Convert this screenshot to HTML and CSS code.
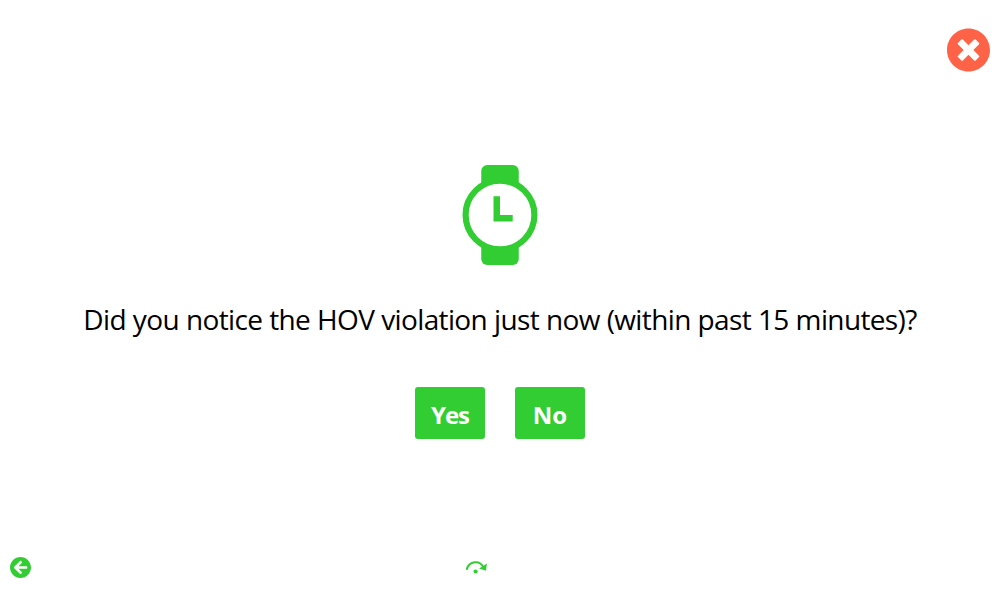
FILE: index.html
```
<!DOCTYPE html>
<html lang="en">
<head>
<meta charset="utf-8">
<title>HOV violation</title>
<link rel="stylesheet" href="styles.css">
</head>
<body>
<div class="page">
  <header class="top">
    <a class="close" aria-label="Close"><svg viewBox="8 2.200 496 507.500" width="43" height="44"><path d="M256 8C119 8 8 119 8 256s111 248 248 248 248-111 248-248S393 8 256 8zm121.600 313.100c4.700 4.700 4.700 12.300 0 17L338 377.600c-4.700 4.700-12.300 4.700-17 0L256 312l-65.100 65.600c-4.700 4.700-12.300 4.700-17 0L134.400 338c-4.700-4.700-4.700-12.300 0-17l65.600-65-65.600-65.100c-4.700-4.700-4.700-12.300 0-17l39.600-39.600c4.700-4.700 12.300-4.700 17 0l65 65.700 65.100-65.600c4.700-4.700 12.300-4.700 17 0l39.600 39.600c4.700 4.700 4.700 12.300 0 17L312 256l65.600 65.100z"/></svg></a>
  </header>
  <main class="content">
    <svg class="watch" viewBox="0 0 76 100" width="76" height="100">
      <rect x="19.250" y="0" width="37.500" height="30" rx="6"/>
      <rect x="19.250" y="70" width="37.500" height="30" rx="6"/>
      <circle class="dial" cx="38" cy="50" r="34.400"/>
      <path d="M31.500 31.250H38V50h12.700v6.400H31.500z"/>
    </svg>
    <h1 class="question">Did you notice the HOV violation just now (within past 15 minutes)?</h1>
    <div class="answers">
      <button class="answer yes">Yes</button>
      <button class="answer no">No</button>
    </div>
  </main>
  <footer class="bottom">
    <a class="back" aria-label="Back"><svg viewBox="8 8 496 496" width="21" height="21"><path d="M256 504C119 504 8 393 8 256S119 8 256 8s248 111 248 248-111 248-248 248zm28.900-143.600L209.400 288H392c13.300 0 24-10.700 24-24v-16c0-13.300-10.700-24-24-24H209.400l75.500-72.400c9.700-9.300 9.900-24.800.4-34.300l-11-10.900c-9.400-9.400-24.600-9.400-33.900 0L107.700 239c-9.400 9.400-9.400 24.600 0 33.900l132.700 132.700c9.400 9.400 24.600 9.400 33.900 0l11-10.900c9.500-9.500 9.300-25-.4-34.300z"/></svg></a>
    <a class="skip" aria-label="Skip"><svg viewBox="0.600 0 22 14" width="22" height="14"><path class="arc" d="M1.300 9.800C3.500 .6 14.500 0 18 7.300"/><path d="M21.500 3.600 20.600 10.800 13.700 8.500z"/><circle cx="10.200" cy="11.500" r="2.100"/></svg></a>
  </footer>
</div>
</body>
</html>
```
FILE: styles.css
```
* { box-sizing: border-box; }
body { margin: 0; background: #fff; font-family: "Segoe UI", "Open Sans", "Noto Sans", sans-serif; }
.page { height: 605px; display: flex; flex-direction: column; overflow: hidden; }
svg { display: block; fill: limegreen; }
.top { display: flex; justify-content: flex-end; height: 165px; padding: 28px 10px 0; }
.close svg { fill: tomato; }
.content { flex: 1; display: flex; flex-direction: column; align-items: center; }
.dial { fill: #fff; stroke: limegreen; stroke-width: 6.200; }
.question { margin: 34px 0 0; height: 40px; line-height: 40px; font-size: 28px; font-weight: 400; color: #000; white-space: nowrap; letter-spacing: -0.63px; word-spacing: 0.25px; }
.answers { display: flex; gap: 30px; margin-top: 48px; }
.answer { width: 70px; height: 52px; padding: 4px 0 0; border: 0; border-radius: 3px; background: limegreen; color: #fff; font-family: inherit; font-size: 24px; font-weight: 700; line-height: 48px; letter-spacing: 0; }
.yes { letter-spacing: -1px; }
.bottom { display: flex; align-items: flex-start; height: 48px; padding-left: 10px; }
.skip { margin: 3px 0 0 435px; }
.arc { fill: none; stroke: limegreen; stroke-width: 2; }
```
